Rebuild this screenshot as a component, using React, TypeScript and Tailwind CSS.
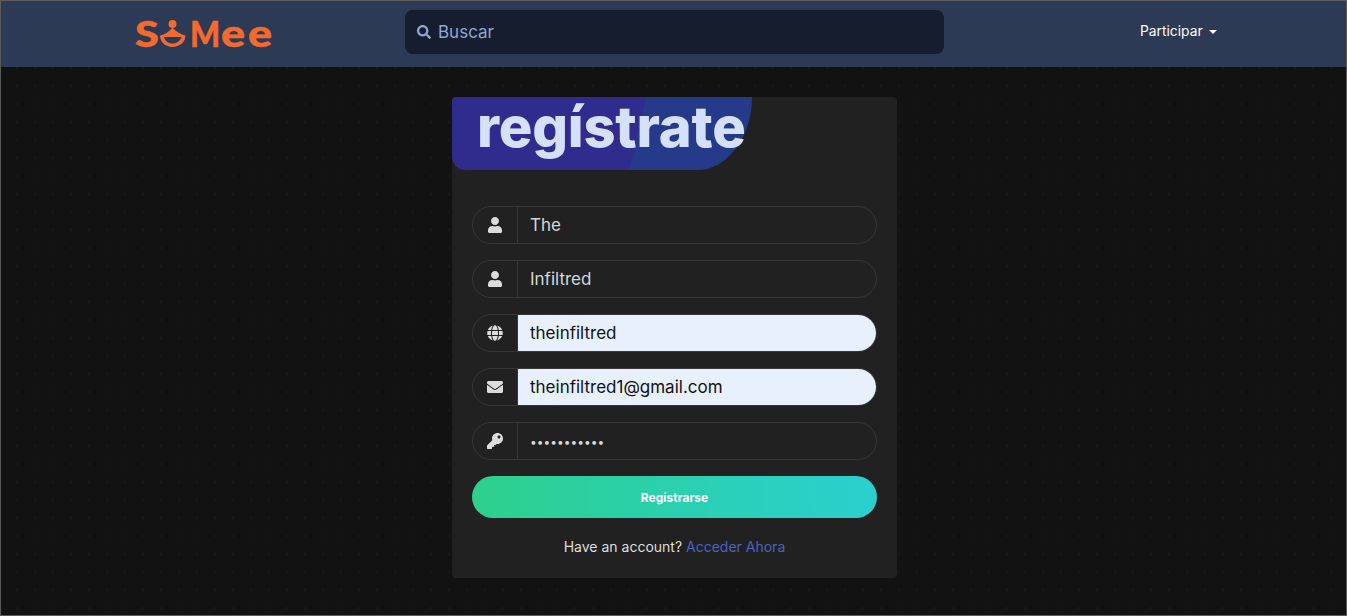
import { FaEnvelope, FaGlobe, FaKey, FaSearch, FaUser } from 'react-icons/fa';
import type { ReactNode } from 'react';

const font = "font-['Inter','Noto_Sans',sans-serif]";

function Logo() {
  return (
    <div className="flex items-baseline mt-[-10px] text-[#f26a2e] font-['Lato',sans-serif] font-black leading-none w-[141px] h-[32px] [-webkit-text-stroke:0.5px_#f26a2e]">
      <span className="text-[36px] w-[25px] inline-block origin-left scale-x-[1.2]">S</span>
      <svg width="26" height="27" viewBox="0 0 26 27" className="shrink-0">
        <circle cx="12.5" cy="4" r="4" fill="#f26a2e" />
        <path d="M0 15.5 C5 14.5 9 12 12.5 7.5 C16 12 21 14.5 25.5 15.5 C25.5 22 19.5 27 12.5 27 C5.5 27 0 22 0 15.5 Z" fill="#f26a2e" />
        <path d="M4 17 L21.5 17 C20 21 17 23.5 12.5 23.5 C8 23.5 5 21 4 17 Z" fill="#2c3a55" />
      </svg>
      <span className="text-[36px] w-[31px] ml-[4px] inline-block origin-left scale-x-[0.88]">M</span>
      <span className="text-[38px] w-[27px] inline-block origin-left scale-x-[1.18]">e</span>
      <span className="text-[38px] w-[27px] inline-block origin-left scale-x-[1.18]">e</span>
    </div>
  );
}

function Field({
  icon,
  value,
  filled,
  small,
}: {
  icon: ReactNode;
  value: string;
  filled?: boolean;
  small?: boolean;
}) {
  return (
    <div className="flex h-[38px] rounded-[19px] border border-[#363636] overflow-hidden">
      <div className="w-[45px] shrink-0 flex items-center justify-center text-[#dcdcdc] text-[16px] border-r border-[#363636]">
        {icon}
      </div>
      <input
        readOnly
        type="text"
        value={value}
        className={`min-w-0 flex-1 px-3 pt-[2px] outline-none ${font} ${small ? 'text-[12px]' : 'text-[17px]'} ${
          filled ? 'bg-[#e8f0fe] text-[#111]' : 'bg-transparent text-[#d6d6d6]'
        }`}
      />
    </div>
  );
}

export default function App() {
  return (
    <div
      className={`h-[616px] flex flex-col border border-[#5a5a5a] bg-[#121212] bg-[radial-gradient(#181818_1px,transparent_1.5px)] bg-[length:18px_18px] bg-[position:7px_4px] overflow-hidden ${font}`}
    >
      <header className="h-[66px] shrink-0 bg-[#2c3a55] flex items-center">
        <div className="w-[404px] pl-[134px] shrink-0">
          <Logo />
        </div>
        <div className="w-[539px] h-[44px] mt-[-4px] rounded-lg bg-[#161d2e] flex items-center pl-3 gap-[7px] text-[#8fa6d3]">
          <FaSearch className="text-[14px]" />
          <span className="text-[17px] pt-[2px]">Buscar</span>
        </div>
        <div className="ml-[196px] mt-[-5px] flex items-center gap-[6px] text-white text-[13.8px]">
          <span>Participar</span>
          <span className="border-x-[4px] border-x-transparent border-t-[4px] border-t-white" />
        </div>
      </header>

      <main className="flex-1 flex justify-center pt-[30px] pl-[2px]">
        <div className="w-[445px] h-[481px] rounded bg-[#212121]">
          <div className="w-[300px] h-[73px] rounded-tl rounded-bl-[14px] rounded-br-[55px_73px] bg-[linear-gradient(103deg,#302c8e_61%,#253b8a_61.5%)] pl-[25px]">
            <h1 className="text-[56px] font-extrabold leading-[60px] text-[#d5e0fd] tracking-[-0.2px]">regístrate</h1>
          </div>
          <form className="flex flex-col gap-4 px-5 pt-9">
            <Field icon={<FaUser />} value="The" />
            <Field icon={<FaUser />} value="Infiltred" />
            <Field icon={<FaGlobe />} value="theinfiltred" filled />
            <Field icon={<FaEnvelope />} value="theinfiltred1@gmail.com" filled />
            <Field icon={<FaKey />} value="•••••••••••" small />
            <button
              type="button"
              className="h-[42px] pt-[1px] rounded-[21px] bg-gradient-to-r from-[#2ed08c] to-[#2bcfcf] text-white text-[12px] font-bold"
            >
              Registrarse
            </button>
          </form>
          <p className="mt-[18px] text-center text-[14px] text-[#dedede]">
            Have an account? <a className="text-[#4a63c4]">Acceder Ahora</a>
          </p>
        </div>
      </main>
    </div>
  );
}
